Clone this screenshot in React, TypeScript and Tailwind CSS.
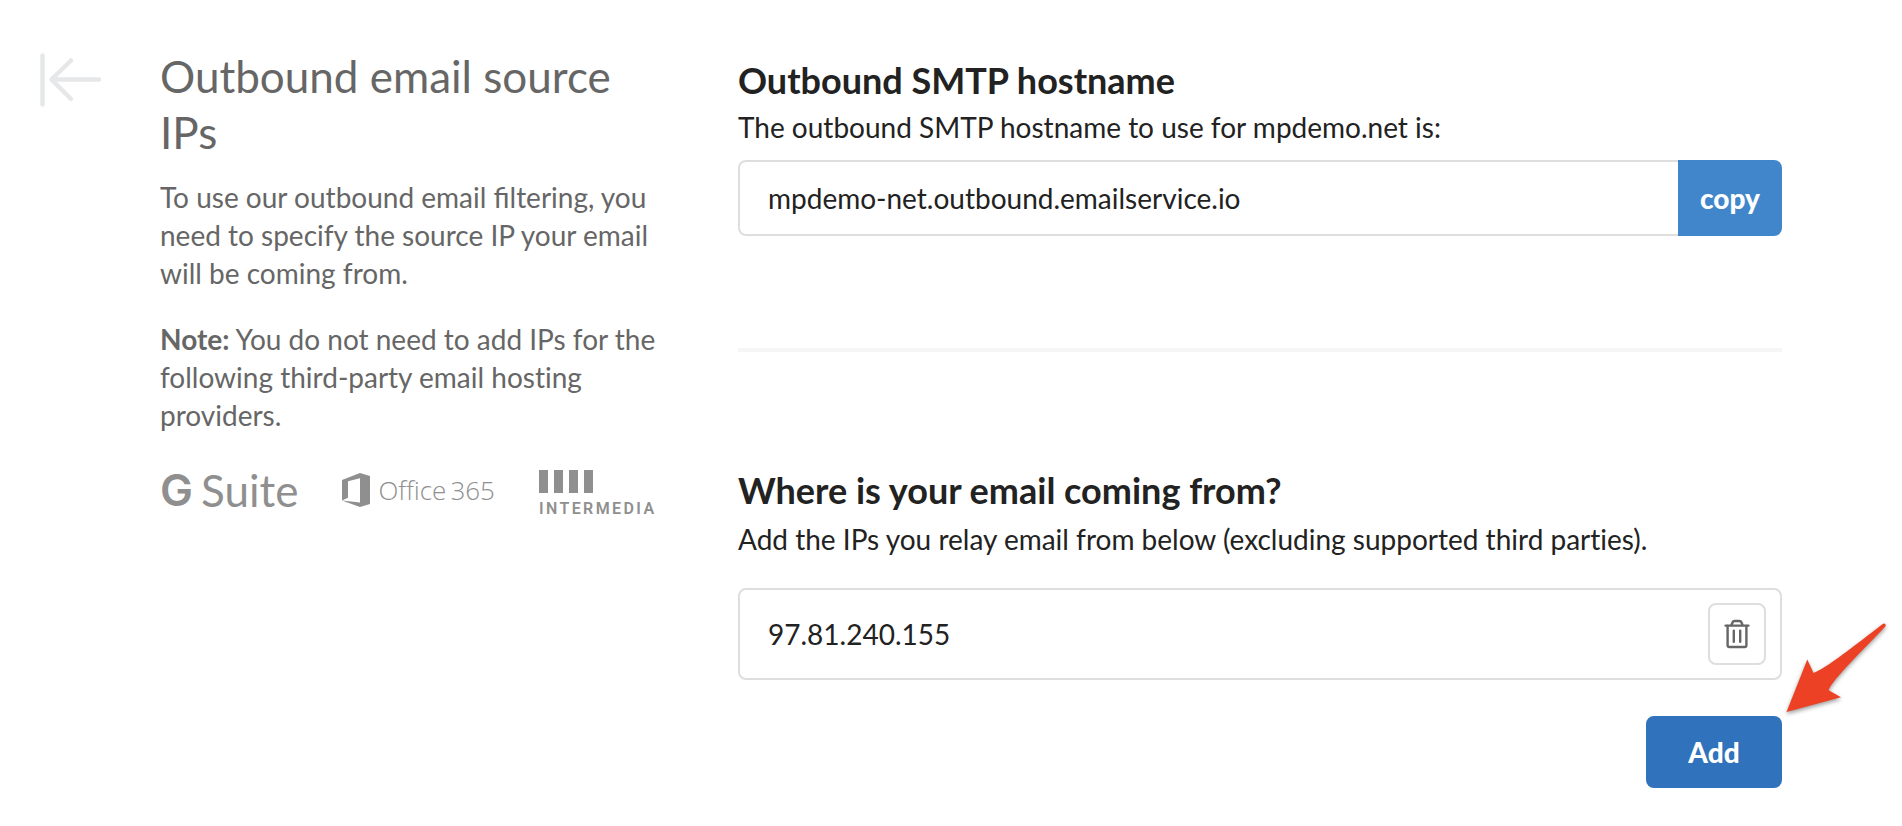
import { useState } from 'react';

const HOSTNAME = 'mpdemo-net.outbound.emailservice.io';

function BackIcon() {
  return (
    <svg width="62" height="54" viewBox="0 0 62 54" fill="none" stroke="#e6e7e9" strokeWidth="4.5" strokeLinecap="round" strokeLinejoin="round">
      <path d="M2.5 2.5v49" />
      <path d="M59 26.5H12" />
      <path d="M31 7.5 11.5 26.5 31 46" />
    </svg>
  );
}

function TrashIcon() {
  return (
    <svg width="26" height="30" viewBox="0 0 26 30" fill="none" stroke="#666" strokeWidth="2.4" strokeLinecap="round" strokeLinejoin="round">
      <path d="M1.6 6.6h22.8" />
      <path d="M7.5 6 8.6 3.2Q9.1 2 10.4 2h5.2q1.3 0 1.8 1.2L18.5 6" />
      <path d="M3.6 7v19.2q0 1.8 1.8 1.8h15.2q1.8 0 1.8-1.8V7" />
      <path d="M9.8 11.6v11.2M16.2 11.6v11.2" />
    </svg>
  );
}

function OfficeIcon() {
  return (
    <svg width="28" height="34" viewBox="0 0 28 34" fill="#8f8f8f">
      <path d="M0 7 18 0l10 3v28l-10 3L0 27.5l18 2.1V5.2L6 8.2v16.6L0 27.5Z" />
    </svg>
  );
}

function IntermediaBars() {
  return (
    <svg width="54" height="23" viewBox="0 0 54 23" fill="#8f8f8f">
      <path d="M0 0h9v23H0zM15 0h9v23h-9zM30 0h9v23h-9zM45 0h9v23h-9z" />
    </svg>
  );
}

function PointerArrow() {
  return (
    <svg className="absolute left-full bottom-full w-[108px] h-[98px] pointer-events-none overflow-visible" viewBox="0 0 108 98">
      <path
        d="M4.5 94 25.3 41.5 31.5 55C43 51 75 26 100 6.5Q103.5 4 103.8 8C82 31 49 63 46.7 72.3L59 79.2Z"
        fill="#ec4125"
        className="drop-shadow-[0_2px_2px_rgba(0,0,0,0.4)]"
      />
    </svg>
  );
}

export default function App() {
  const [ips, setIps] = useState<string[]>(['97.81.240.155']);

  const updateIp = (i: number, value: string) => setIps(p => p.map((ip, n) => (n === i ? value : ip)));
  const removeIp = (i: number) => setIps(p => p.filter((_, n) => n !== i));

  return (
    <div className="min-h-screen bg-white flex items-start pl-10 pr-[120px] pt-12 pb-9 font-['Lato',sans-serif] text-[28px] leading-[38px] text-[#222]">
      {/* Back */}
      <button aria-label="Back" className="shrink-0 mt-[5px] mr-[58px]">
        <BackIcon />
      </button>

      {/* Description */}
      <aside className="w-[500px] shrink-0 text-[#666]">
        <h1 className="text-[44px] leading-[56px]">Outbound email source IPs</h1>
        <p className="mt-[18px]">
          To use our outbound email filtering, you need to specify the source IP your email will be coming from.
        </p>
        <p className="mt-7 [font-variant-ligatures:none]">
          <strong>Note:</strong> You do not need to add IPs for the following third-party email hosting providers.
        </p>

        {/* Supported providers */}
        <div className="mt-7 flex items-center gap-11 text-[#8f8f8f]">
          <div className="flex items-center gap-2 text-[44px] leading-[48px]">
            <span className="font-['Inter',sans-serif] font-semibold">G</span>
            <span>Suite</span>
          </div>
          <div className="flex items-center gap-2 font-['Open_Sans',sans-serif] font-light text-[26px]">
            <OfficeIcon />
            <div className="flex gap-1">
              <span>Office</span>
              <span>365</span>
            </div>
          </div>
          <div className="flex flex-col gap-2 pt-2">
            <IntermediaBars />
            <span className="font-['Roboto',sans-serif] text-[16px] leading-[16px] font-semibold tracking-[0.15em]">INTERMEDIA</span>
          </div>
        </div>
      </aside>

      <main className="flex-1 min-w-0 ml-[78px] pt-1">
        {/* Hostname */}
        <section>
          <h2 className="text-[36px] leading-[56px] font-bold">Outbound SMTP hostname</h2>
          <label htmlFor="hostname" className="block">The outbound SMTP hostname to use for mpdemo.net is:</label>
          <div className="mt-[14px] flex h-[76px]">
            <input
              id="hostname"
              readOnly
              value={HOSTNAME}
              className="flex-1 min-w-0 border-2 border-r-0 border-[#dedede] rounded-l-lg px-7 outline-none"
            />
            <button
              onClick={() => navigator.clipboard?.writeText(HOSTNAME)}
              className="w-[104px] bg-[#4186cb] text-white font-black rounded-r-lg"
            >
              copy
            </button>
          </div>
        </section>

        <hr className="mt-28 mb-[110px] border-t-4 border-[#f6f6f6]" />

        {/* IP list */}
        <section>
          <h2 className="text-[36px] leading-[56px] font-bold">Where is your email coming from?</h2>
          <p className="mt-[2px] [font-variant-ligatures:none]">
            Add the IPs you relay email from below (excluding supported third parties).
          </p>
          <div className="mt-[30px] space-y-4">
            {ips.map((ip, i) => (
              <div key={i} className="flex items-center h-[92px] border-2 border-[#dedede] rounded-lg pl-7 pr-[14px]">
                <input
                  aria-label="IP address"
                  value={ip}
                  onChange={e => updateIp(i, e.target.value)}
                  className="flex-1 min-w-0 outline-none"
                />
                <button
                  aria-label="Remove IP"
                  onClick={() => removeIp(i)}
                  className="w-[58px] h-[62px] flex items-center justify-center border-2 border-[#dedede] rounded-lg"
                >
                  <TrashIcon />
                </button>
              </div>
            ))}
          </div>
          <div className="mt-9 flex justify-end">
            <div className="relative">
              <button
                onClick={() => setIps(p => [...p, ''])}
                className="w-[136px] h-[72px] bg-[#3072bb] text-white font-black rounded-lg"
              >
                Add
              </button>
              <PointerArrow />
            </div>
          </div>
        </section>
      </main>
    </div>
  );
}
